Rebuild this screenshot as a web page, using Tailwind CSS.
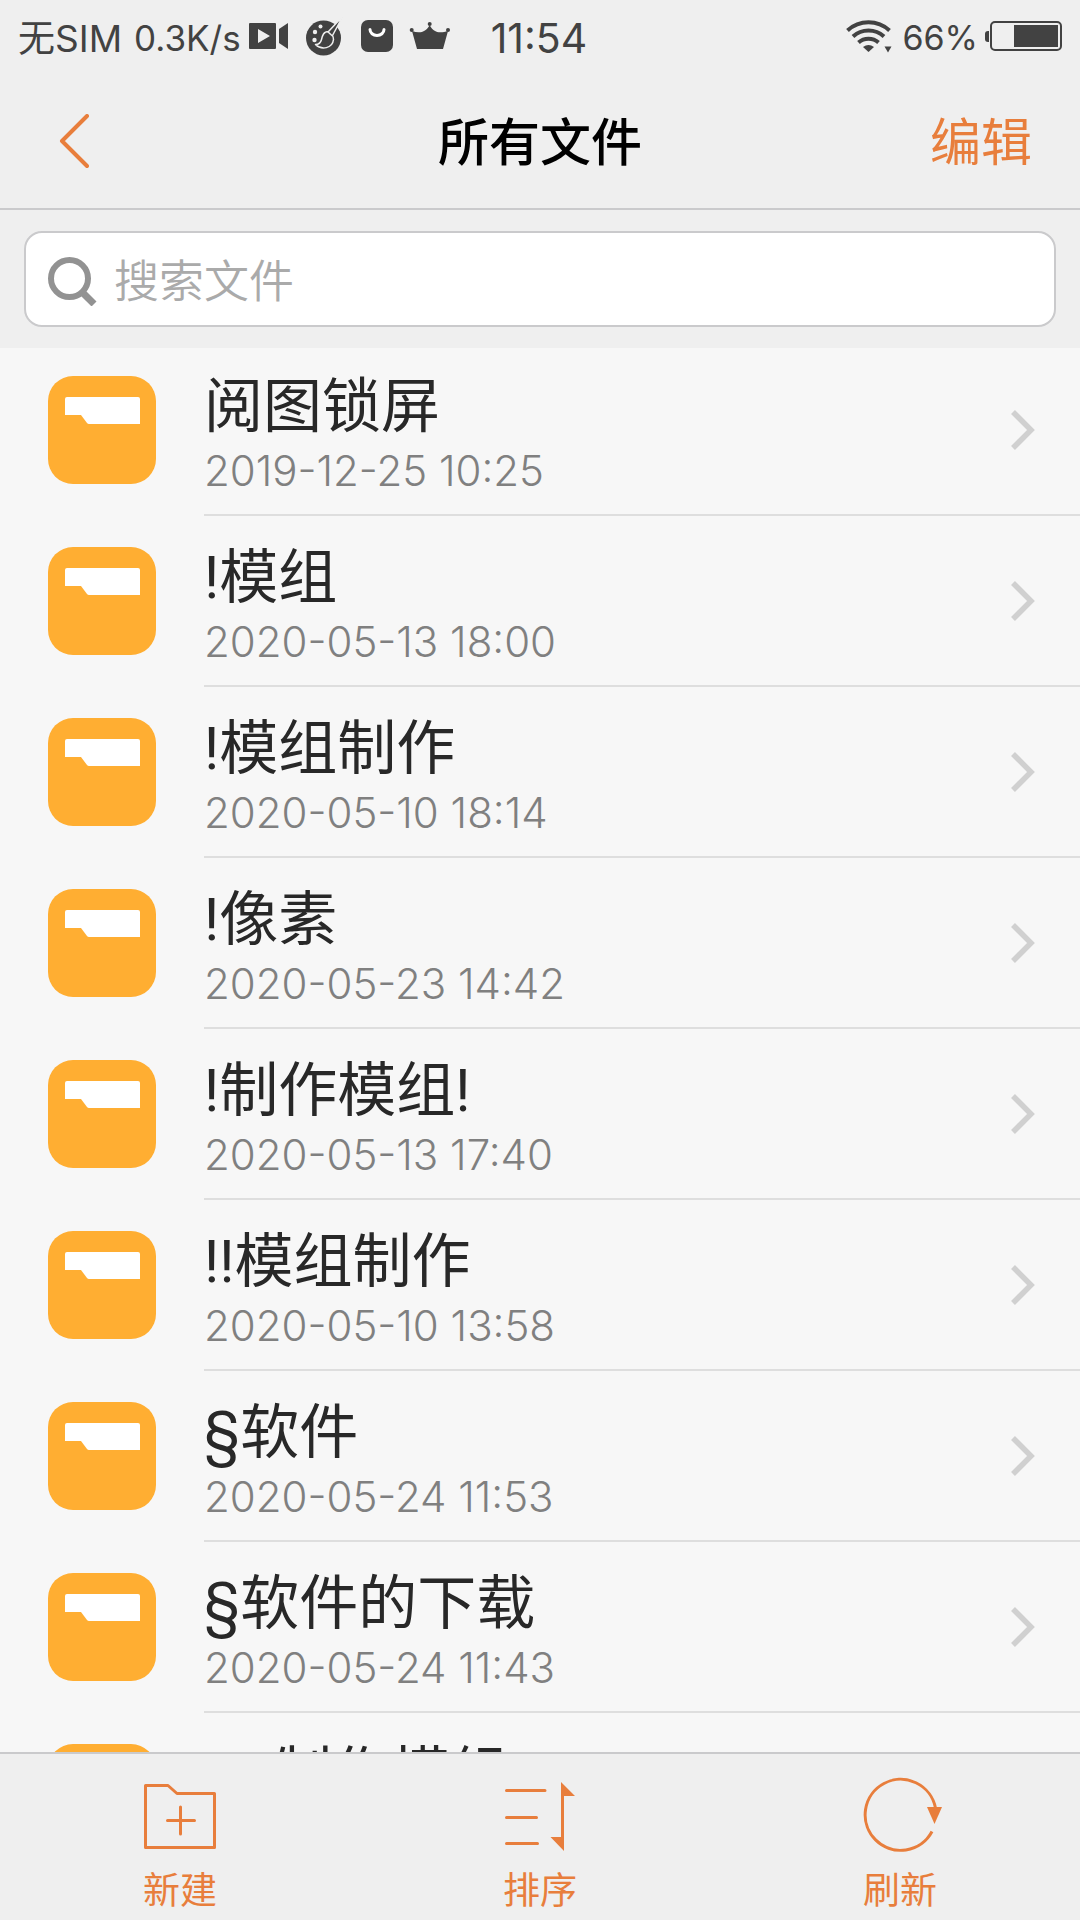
<!DOCTYPE html>
<html lang="zh-CN">
<head>
<meta charset="utf-8">
<meta name="viewport" content="width=device-width, initial-scale=1">
<title>所有文件</title>
<script src="https://cdn.jsdelivr.net/npm/@tailwindcss/browser@4"></script>
</head>
<body class="flex h-screen flex-col overflow-hidden bg-[#f7f7f7] font-['Inter','Noto_Sans_CJK_SC',sans-serif] text-[#282828]">

<!-- Shared symbols for the file rows -->
<svg class="hidden" aria-hidden="true">
  <symbol id="folder" viewBox="0 0 108 108">
    <rect width="108" height="108" rx="25" fill="#ffae32"/>
    <path d="M17 23a2 2 0 0 1 2-2h71a2 2 0 0 1 2 2v25H41a3 3 0 0 1-2-1l-6-8H17z" fill="#fff"/>
  </symbol>
  <symbol id="chevron" viewBox="0 0 24 40">
    <path d="M2 2l18 18L2 38" fill="none" stroke="#d0d0d0" stroke-width="5.500"/>
  </symbol>
</svg>

<div class="flex h-[76px] shrink-0 items-center justify-between bg-[#efefef] px-[18px] leading-none text-[#424242]">
  <div class="flex items-center">
    <span class="text-[37px]">无SIM</span>
    <span class="ml-3 text-[35px]">0.3K/s</span>
    <div class="ml-2 flex items-center gap-4">
      <svg class="h-11 w-10" viewBox="0 0 40 44" fill="currentColor" aria-hidden="true"><path fill-rule="evenodd" d="M1 7h25a1 1 0 0 1 1 1v24a1 1 0 0 1-1 1H1a1 1 0 0 1-1-1V8a1 1 0 0 1 1-1zM9 13v14l12-7z"/><path d="M30 13l9-6v26l-9-6z"/></svg>
      <svg class="h-11 w-10" viewBox="0 0 40 44" aria-hidden="true">
        <circle cx="18.500" cy="22" r="17.500" fill="currentColor"/>
        <g fill="#efefef"><circle cx="15.500" cy="10.500" r="2"/><circle cx="10" cy="16" r="2.200"/><circle cx="9.500" cy="24" r="2.200"/></g>
        <path d="M38 0L23.500 15.500c-5 0-6 4-7 8-1 4-3 5-6 5 6 6 17 4 18-5 0-2-.5-3-1-4z" fill="currentColor" stroke="#efefef" stroke-width="1.500" stroke-linejoin="round"/>
        <path d="M22.500 15.500l5 4.500" stroke="#efefef" stroke-width="1.500"/>
      </svg>
      <svg class="h-11 w-8" viewBox="0 0 32 44" aria-hidden="true"><rect y="4" width="32" height="32" rx="7" fill="currentColor"/><path d="M9 13.500a7 6 0 0 0 14 0" fill="none" stroke="#fff" stroke-width="3" stroke-linecap="round"/></svg>
      <svg class="h-11 w-[42px]" viewBox="0 0 42 44" fill="currentColor" aria-hidden="true"><path d="M3 15c8 3 14 1 17.700-6C24 16 30 18 39 15l-5 18H8z"/><circle cx="2.700" cy="14" r="2"/><circle cx="20.700" cy="8" r="2"/><circle cx="39" cy="14" r="2"/></svg>
    </div>
    <time class="ml-10 text-[41px]">11:54</time>
  </div>
  <div class="flex items-center">
    <svg class="h-11 w-12" viewBox="0 0 48 44" fill="none" stroke="currentColor" stroke-width="4" aria-label="Wi-Fi">
      <path d="M1.500 14.500a31 31 0 0 1 42 0M7 20.500a23 23 0 0 1 31 0M12.500 26.500a15 15 0 0 1 20 0"/>
      <path d="M17 31a9 9 0 0 1 11 0l-5.500 5z" fill="currentColor" stroke="none"/>
      <path d="M38.500 30.500h7l-3.500 6z" fill="currentColor" stroke="none"/>
    </svg>
    <span class="ml-2 text-[34px]">66%</span>
    <svg class="ml-1.5 h-11 w-[78px]" viewBox="0 0 78 44" aria-label="电量 66%"><path d="M5 15H4a3 3 0 0 0-3 3v5a3 3 0 0 0 3 3h1z" fill="currentColor"/><rect x="7" y="6" width="70" height="28" rx="4" fill="none" stroke="currentColor" stroke-width="2"/><path d="M30 9h44v22H30z" fill="currentColor"/></svg>
  </div>
</div>

<header class="grid h-[134px] shrink-0 grid-cols-3 items-center border-b-2 border-[#cacacc] bg-[#efefef] px-12">
  <button type="button" aria-label="返回" class="justify-self-start text-[#e87e3c]">
    <svg class="h-14 w-14" viewBox="0 0 56 56" fill="none" stroke="currentColor" stroke-width="4" stroke-linecap="round" stroke-linejoin="round" aria-hidden="true"><path d="M39 2L14 27l25 25"/></svg>
  </button>
  <h1 class="justify-self-center text-[51px] leading-none font-medium text-black">所有文件</h1>
  <button type="button" class="justify-self-end text-[51px] leading-none text-[#e87e3c]">编辑</button>
</header>

<form role="search" class="shrink-0 bg-[#efefef] px-6 py-[21px]">
  <label class="flex h-24 items-center rounded-[18px] border-2 border-[#cacacc] bg-white pt-1 pl-[22px]">
    <svg class="h-[50px] w-[50px] shrink-0" viewBox="0 0 50 50" fill="none" stroke="#929292" stroke-width="6" aria-hidden="true"><circle cx="21.500" cy="22.500" r="18.500"/><path d="M34.500 36.500L46 48" stroke-width="7"/></svg>
    <input type="search" aria-label="搜索文件" placeholder="搜索文件" class="ml-4 h-full min-w-0 flex-1 bg-transparent text-[45px] font-[350] outline-none placeholder:text-[#aaaaaa]">
  </label>
</form>

<main class="min-h-0 flex-1 overflow-hidden">
  <ul id="files" class="-mt-[3px]"></ul>
</main>

<nav class="grid shrink-0 grid-cols-3 border-t-2 border-[#cacacc] bg-[#efefef] text-[37px] leading-none text-[#e87e3c]">
  <button type="button" class="flex flex-col items-center gap-4 pt-[22px] pb-[11px]">
    <svg class="h-20 w-20" viewBox="0 0 80 80" fill="none" stroke="currentColor" stroke-width="3" stroke-linejoin="round" stroke-linecap="round" aria-hidden="true"><path d="M5.500 9.500H28l9 8h37.500v54h-69zM27.500 44.500h27M40.500 31v27"/></svg>
    新建
  </button>
  <button type="button" class="flex flex-col items-center gap-4 pt-[22px] pb-[11px]">
    <svg class="h-20 w-20" viewBox="0 0 80 80" fill="none" stroke="currentColor" stroke-width="3" stroke-linecap="round" aria-hidden="true"><path d="M6.500 14.500H45M6.500 41.500h30M6.500 67.500h31"/><path d="M61 6l14 14H64v55L50.500 61H61z" fill="currentColor" stroke="none"/></svg>
    排序
  </button>
  <button type="button" class="flex flex-col items-center gap-4 pt-[22px] pb-[11px]">
    <svg class="h-20 w-20 overflow-visible" viewBox="0 0 80 80" fill="none" stroke="currentColor" stroke-width="3" aria-hidden="true"><path d="M72 55.500A35.500 35.500 0 1 1 75.500 32"/><path d="M67 31h15l-7.500 17z" fill="currentColor" stroke="none"/></svg>
    刷新
  </button>
</nav>

<script>
const files = [
  ["阅图锁屏", "2019-12-25 10:25"],
  ["!模组", "2020-05-13 18:00"],
  ["!模组制作", "2020-05-10 18:14"],
  ["!像素", "2020-05-23 14:42"],
  ["!制作模组!", "2020-05-13 17:40"],
  ["!!模组制作", "2020-05-10 13:58"],
  ["§软件", "2020-05-24 11:53"],
  ["§软件的下载", "2020-05-24 11:43"],
  ["§--制作模组", "2020-05-24 11:40"],
];
document.getElementById("files").innerHTML = files.map(([name, date]) => `
  <li>
    <a href="#" class="flex gap-12 pl-12">
      <svg class="mt-[31px] size-[108px] shrink-0" aria-hidden="true"><use href="#folder"/></svg>
      <span class="flex min-w-0 flex-1 items-center justify-between border-b-2 border-[#dedede] pr-[45px]">
        <span class="flex min-w-0 flex-col gap-2 pt-[30px] pb-[19px]">
          <span class="font-['Roboto','Noto_Sans_CJK_SC',sans-serif] text-[59px] leading-[64px] whitespace-nowrap">${name}</span>
          <time class="text-[42px] leading-[48px] font-[350] text-[#808080]">${date}</time>
        </span>
        <svg class="h-10 w-6 shrink-0" aria-hidden="true"><use href="#chevron"/></svg>
      </span>
    </a>
  </li>`).join("");
</script>
</body>
</html>
